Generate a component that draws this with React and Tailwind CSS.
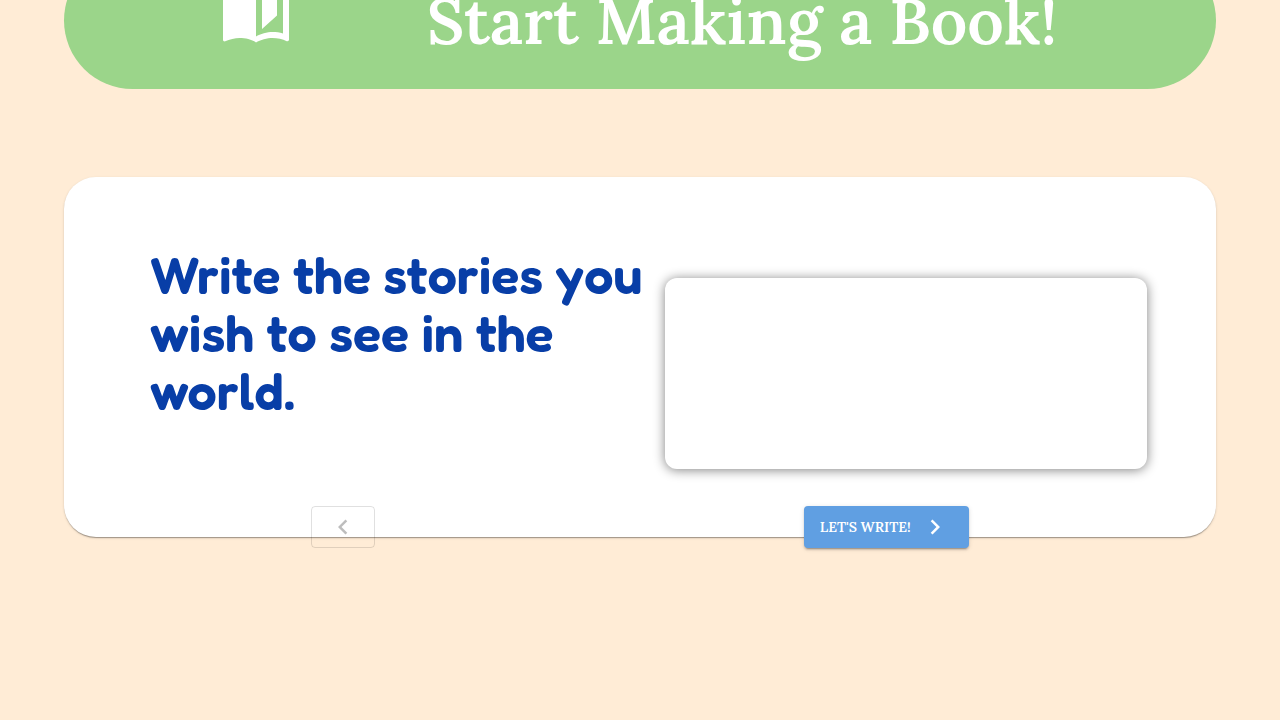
import { MdAutoStories, MdKeyboardArrowLeft, MdKeyboardArrowRight } from "react-icons/md";

function StartBanner() {
  return (
    <button className="-mt-12 flex h-[137px] w-full items-center justify-center gap-[135px] rounded-full bg-[#9bd58a] pr-[3px] font-['Lora','Liberation_Serif',serif] text-[64px] font-semibold text-white">
      <MdAutoStories size={72} className="mb-[14px]" aria-hidden="true" />
      <span>Start Making a Book!</span>
    </button>
  );
}

function StoryCard() {
  return (
    <section className="h-[360px] rounded-[32px] bg-white pt-[69px] shadow-[0_2px_1px_-1px_rgba(0,0,0,0.2),0_1px_1px_0_rgba(0,0,0,0.14),0_1px_3px_0_rgba(0,0,0,0.12)]">
      <div className="flex pl-[86px] pr-[69px]">
        <h2 className="flex-1 font-['Fredoka_One','Fredoka','Inter',sans-serif] text-[52px] font-semibold leading-[58px] text-[#083ea7]">
          Write the stories you wish to see in the world.
        </h2>
        <div className="mt-8 h-[191px] w-[482px] rounded-xl bg-white shadow-[0_1px_12px_#808080]" />
      </div>
      <div className="mt-[37px] grid grid-cols-2 justify-items-center pl-[7px] pr-[58px]">
        <button disabled aria-label="Previous" className="flex h-[42px] w-16 items-center justify-center rounded border border-black/12 text-black/26">
          <MdKeyboardArrowLeft size={30} />
        </button>
        <button className="flex h-[42px] items-center gap-[9px] rounded bg-[#609fe2] pl-4 pr-[19px] font-['Lora','Liberation_Serif',serif] text-[14px] font-semibold uppercase text-white shadow-[0_3px_1px_-2px_rgba(0,0,0,0.2),0_2px_2px_0_rgba(0,0,0,0.14),0_1px_5px_0_rgba(0,0,0,0.12)]">
          Let's Write!
          <MdKeyboardArrowRight size={30} />
        </button>
      </div>
    </section>
  );
}

export default function App() {
  return (
    <main className="flex min-h-screen flex-col gap-[88px] overflow-hidden bg-[#ffecd6] px-[5%]">
      <StartBanner />
      <StoryCard />
    </main>
  );
}
